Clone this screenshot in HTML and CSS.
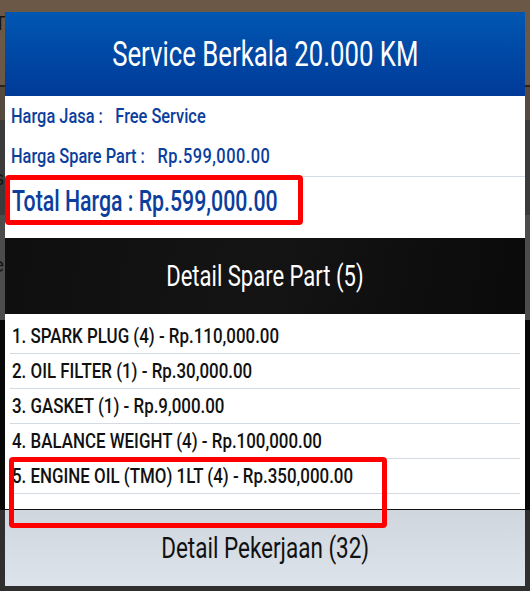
FILE: index.html
```html
<!DOCTYPE html>
<html lang="id">
<head>
<meta charset="utf-8">
<title>Service Berkala</title>
<link rel="stylesheet" href="styles.css">
</head>
<body>
<div class="page">
  <div class="page-top"><span class="frag frag-t">T</span></div>
  <div class="page-rule"></div>
  <div class="page-band1"></div>
  <div class="page-band2"><span class="frag frag-s">s</span></div>
  <div class="page-band3"><span class="frag frag-e">e</span></div>
  <div class="page-band4"></div>
  <div class="page-band5"></div>
</div>
<div class="modal">
  <header class="modal-head"><span class="cx cx-title">Service Berkala 20.000 KM</span></header>
  <section class="info">
    <div class="info-row"><span class="cx cx-info">Harga Jasa :<span class="val">Free Service</span></span></div>
    <div class="info-row info-row-sep"><span class="cx cx-info">Harga Spare Part :<span class="val num">Rp.599,000.00</span></span></div>
    <div class="info-total"><span class="cx cx-total">Total Harga : Rp.599,000.00</span></div>
  </section>
  <div class="bar-dark"><span class="cx cx-bar">Detail Spare Part (5)</span></div>
  <ul class="parts">
    <li><span class="cx cx-item">1. SPARK PLUG (4) - Rp.110,000.00</span></li>
    <li><span class="cx cx-item">2. OIL FILTER (1) - Rp.30,000.00</span></li>
    <li><span class="cx cx-item">3. GASKET (1) - Rp.9,000.00</span></li>
    <li><span class="cx cx-item">4. BALANCE WEIGHT (4) - Rp.100,000.00</span></li>
    <li><span class="cx cx-item">5. ENGINE OIL (TMO) 1LT (4) - Rp.350,000.00</span></li>
  </ul>
  <div class="bar-light"><span class="cx cx-bar cx-bar-light">Detail Pekerjaan (32)</span></div>
  <div class="mark mark-total"></div>
  <div class="mark mark-item"></div>
</div>
</body>
</html>
```
FILE: styles.css
```css
html, body {
  margin: 0;
  padding: 0;
}
body {
  width: 530px;
  height: 591px;
  overflow: hidden;
  position: relative;
  background: #2d2d2d;
  font-family: Roboto, "Liberation Sans", sans-serif;
  font-weight: 500;
}
.page {
  display: flex;
  flex-direction: column;
  height: 591px;
}
.page-top { height: 85px; background: #6b5846; }
.page-rule { height: 2px; background: #2a231d; }
.page-band1 { height: 33px; background: #564a3e; }
.page-band2 { height: 95px; background: #3b3b3b; }
.page-band3 { height: 105px; background: #4c4c4c; }
.page-band4 { height: 190px; background: #070707; }
.page-band5 { flex: 1; background: #2f2f2f; }
.frag {
  display: block;
  color: #141414;
  font-family: "Liberation Sans", sans-serif;
  font-size: 20px;
  line-height: 20px;
}
.frag-t { margin: 13px 0 0 -6px; }
.frag-s { margin: 48px 0 0 -6px; }
.frag-e { margin: 40px 0 0 -7px; }

.cx {
  display: inline-block;
  white-space: nowrap;
  transform-origin: left center;
}
.cx-title { transform: scaleX(0.735); transform-origin: center; }
.cx-info { transform: scaleX(0.78); }
.cx-total { transform: scaleX(0.735); }
.cx-bar { transform: scaleX(0.76); transform-origin: center; }
.cx-bar-light { transform: scaleX(0.775); }
.cx-item { transform: scaleX(0.805); }
.val { margin-left: 16px; }
.num { letter-spacing: 0.6px; }

.modal {
  position: absolute;
  left: 5px;
  top: 12px;
  width: 520px;
  display: flex;
  flex-direction: column;
  background: #fff;
}
.modal-head {
  height: 84px;
  display: flex;
  align-items: center;
  justify-content: center;
  background: linear-gradient(#0057b2, #003a98);
  color: #fff;
  font-size: 35px;
  font-weight: 400;
}
.info {
  display: flex;
  flex-direction: column;
  color: #0b3e9d;
}
.info-row {
  height: 40px;
  display: flex;
  align-items: center;
  padding-left: 6px;
  font-size: 21px;
}
.info-row-sep {
  border-bottom: 1px solid #d7dde6;
}
.info-total {
  height: 47px;
  padding-bottom: 14px;
  display: flex;
  align-items: center;
  padding-left: 7px;
  font-size: 29px;
}
.bar-dark {
  height: 76px;
  display: flex;
  align-items: center;
  justify-content: center;
  background: linear-gradient(100deg, #0f0f0f, #141414 50%, #0a0a0a);
  color: #fff;
  font-size: 29px;
  font-weight: 400;
}
.parts {
  list-style: none;
  margin: 0;
  padding: 5px 5px 15px;
}
.parts li {
  height: 34px;
  display: flex;
  align-items: center;
  padding-left: 2px;
  border-bottom: 1px solid #d3dae3;
  color: #111;
  font-size: 21px;
}
.bar-light {
  height: 76px;
  display: flex;
  align-items: center;
  justify-content: center;
  border-top: 1px solid #111;
  background: linear-gradient(#cfd6de, #dde3ea);
  color: #111;
  font-size: 29px;
  font-weight: 400;
}
.mark {
  position: absolute;
  border: 5px solid #ff0000;
  border-radius: 4px;
  box-sizing: border-box;
}
.mark-total {
  left: 0;
  top: 163px;
  width: 298px;
  height: 50px;
}
.mark-item {
  left: 4px;
  top: 445px;
  width: 378px;
  height: 71px;
}
```
